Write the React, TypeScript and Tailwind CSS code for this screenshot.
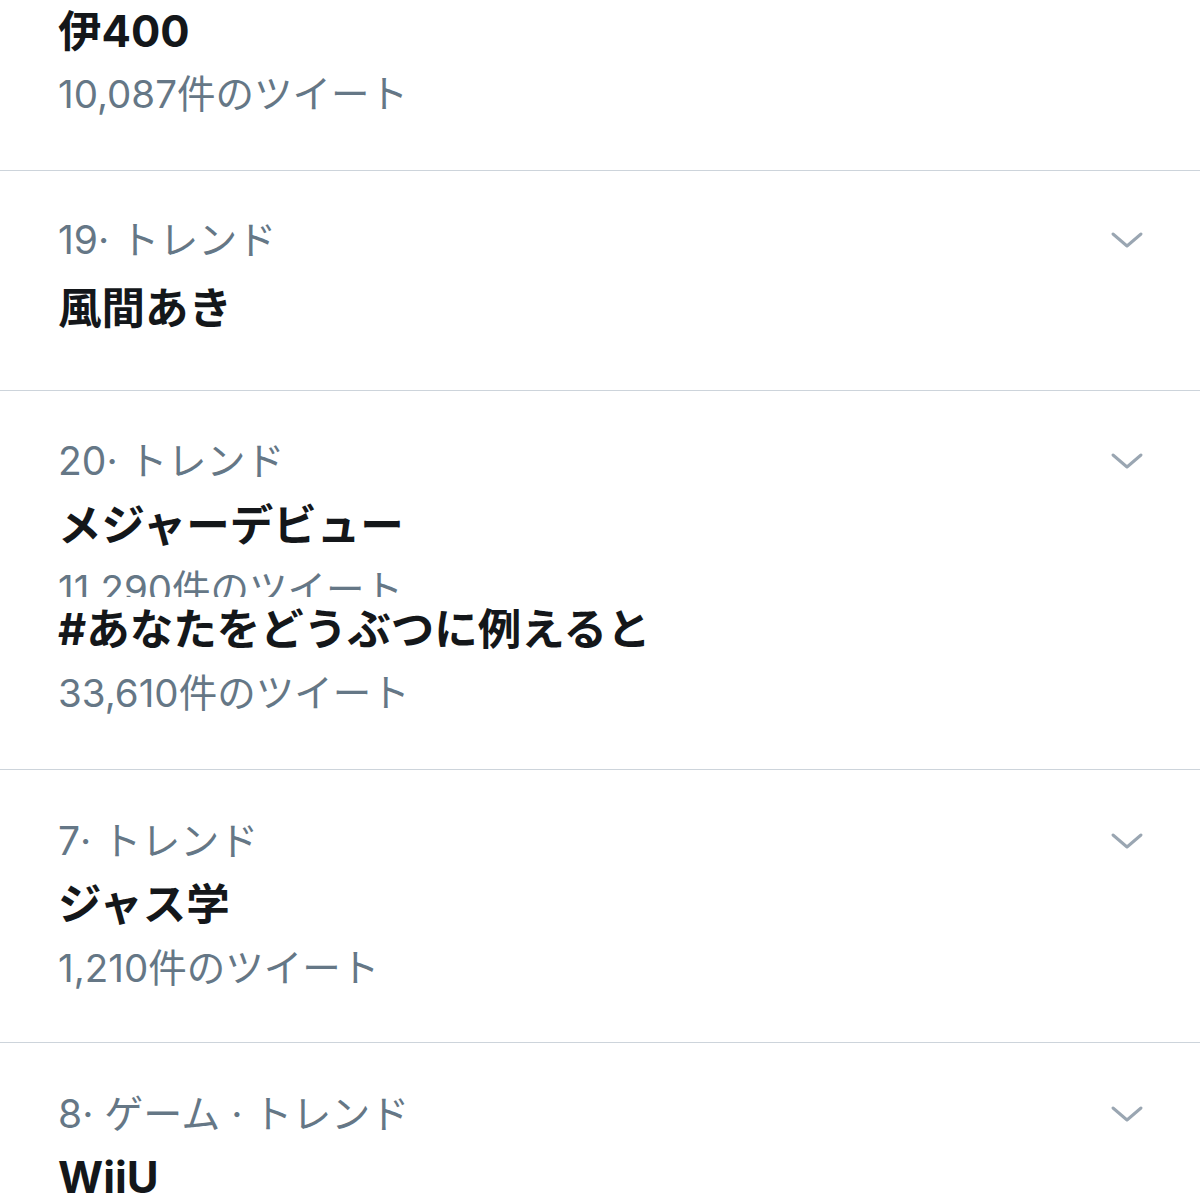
import React from "react";

const FONT = { fontFamily: 'Inter, "Noto Sans CJK JP", "Noto Sans", sans-serif' };

function Chevron() {
  return (
    <svg width="36" height="22" viewBox="0 0 36 22" className="absolute right-[55px] top-1/2 -translate-y-1/2">
      <path d="M4 5 L18 17 L32 5" fill="none" stroke="#9aa6b2" strokeWidth="3" strokeLinecap="round" strokeLinejoin="round" />
    </svg>
  );
}

function Label({ text }: { text: string }) {
  return (
    <div className="relative h-[64px] leading-[64px] text-[39px] text-[#657786] whitespace-nowrap">
      {text}
      <Chevron />
    </div>
  );
}

function Title({ text, h = 63 }: { text: string; h?: number }) {
  return (
    <div
      className={`${h === 64 ? "h-[64px] leading-[64px]" : h === 62 ? "h-[62px] leading-[62px]" : "h-[63px] leading-[63px]"} text-[43.5px] font-bold text-[#14171a] whitespace-nowrap`}
    >
      {text}
    </div>
  );
}

function Count({ text }: { text: string }) {
  return (
    <div className="h-[64px] leading-[64px] text-[38.5px] text-[#657786] whitespace-nowrap">{text}</div>
  );
}

function Divider() {
  return <div className="h-[1px] bg-[#cdd4db]" />;
}

export default function App() {
  return (
    <div className="w-[1200px] h-[1200px] overflow-hidden bg-white" style={FONT}>
      {/* partial row */}
      <div className="pl-[58px] pb-[44px]">
        <Title text="伊400" h={62} />
        <Count text="10,087件のツイート" />
      </div>
      <Divider />
      {/* row 19 */}
      <div className="pl-[58px] pt-[37px] pb-[50px]">
        <Label text="19· トレンド" />
        <div className="mt-[4px]">
          <Title text="風間あき" h={64} />
        </div>
      </div>
      <Divider />
      {/* row 20, clipped */}
      <div className="pl-[58px] pt-[38px] h-[206px] overflow-hidden">
        <Label text="20· トレンド" />
        <Title text="メジャーデビュー" h={64} />
        <Count text="11,290件のツイート" />
      </div>
      {/* overlapped row */}
      <div className="pl-[58px] pb-[44px]">
        <Title text="#あなたをどうぶつに例えると" h={64} />
        <Count text="33,610件のツイート" />
      </div>
      <Divider />
      {/* row 7 */}
      <div className="pl-[58px] pt-[39px] pb-[42px]">
        <Label text="7· トレンド" />
        <Title text="ジャス学" />
        <Count text="1,210件のツイート" />
      </div>
      <Divider />
      {/* row 8 */}
      <div className="pl-[58px] pt-[39px]">
        <Label text="8· ゲーム · トレンド" />
        <Title text="WiiU" />
      </div>
    </div>
  );
}
